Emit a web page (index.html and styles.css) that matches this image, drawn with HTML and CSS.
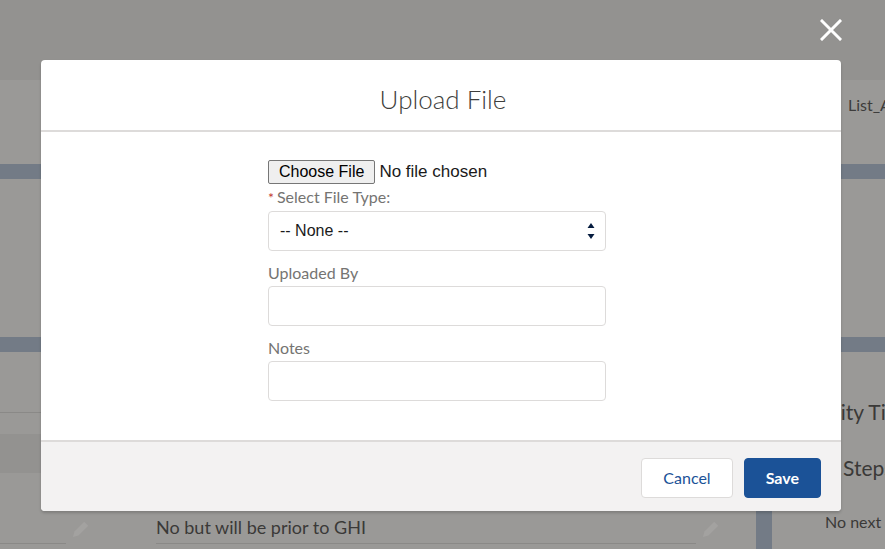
FILE: index.html
```html
<!DOCTYPE html>
<html lang="en">
<head>
<meta charset="utf-8">
<title>Upload File</title>
<link rel="stylesheet" href="styles.css">
</head>
<body>
<div class="page">
  <div class="bg-header"></div>
  <div class="bg-section bg-section-top">
    <span class="list-label">List_Attachments</span>
  </div>
  <div class="bg-stripe"></div>
  <div class="bg-section bg-section-mid"></div>
  <div class="bg-stripe"></div>
  <div class="bg-lower">
    <div class="bg-main">
      <div class="bg-rule"></div>
      <div class="bg-band"></div>
      <div class="bg-fields">
        <div class="bg-field bg-field-short"></div>
        <svg class="pencil" viewBox="0 0 18 18"><path d="M13 0.8l4.2 4.2-10.4 10.4-5.8 1.6 1.6-5.8z" fill="currentColor"/></svg>
        <div class="bg-field bg-field-long">No but will be prior to GHI</div>
        <svg class="pencil" viewBox="0 0 18 18"><path d="M13 0.8l4.2 4.2-10.4 10.4-5.8 1.6 1.6-5.8z" fill="currentColor"/></svg>
      </div>
    </div>
    <div class="bg-vstrip"></div>
    <div class="bg-side">
      <div class="side-title side-title-1">Activity Timeline</div>
      <div class="side-title side-title-2">Next Steps</div>
      <div class="side-note">No next steps</div>
    </div>
  </div>
</div>

<button class="close-btn" aria-label="Close">
  <svg viewBox="0 0 22 22" width="22" height="22"><path d="M2 2L20 20M20 2L2 20" stroke="#fff" stroke-width="3" stroke-linecap="square"/></svg>
</button>

<div class="modal">
  <div class="modal-header">
    <h2 class="modal-title">Upload File</h2>
  </div>
  <div class="modal-body">
    <div class="form">
      <div class="file-row">
        <span class="file-btn">Choose File</span>
        <span class="file-text">No file chosen</span>
      </div>
      <label class="label label-first"><abbr class="req">*</abbr>Select File Type:</label>
      <div class="select">
        <span class="select-value">-- None --</span>
        <span class="select-arrows">
          <svg viewBox="0 0 8 18" width="8" height="18"><path d="M4 1L7.5 6H0.5z M0.5 12H7.5L4 17z" fill="#061c3f"/></svg>
        </span>
      </div>
      <label class="label">Uploaded By</label>
      <div class="input"></div>
      <label class="label">Notes</label>
      <div class="input"></div>
    </div>
  </div>
  <div class="modal-footer">
    <button class="btn btn-neutral">Cancel</button>
    <button class="btn btn-brand">Save</button>
  </div>
</div>
</body>
</html>
```

FILE: styles.css
```css
html, body {
  margin: 0;
  padding: 0;
}
body {
  width: 885px;
  height: 549px;
  overflow: hidden;
  position: relative;
  background: #9a9997;
  font-family: Lato, "Noto Sans", sans-serif;
}
.page {
  display: flex;
  flex-direction: column;
  height: 549px;
}
.bg-header {
  height: 80px;
  background: #939290;
  flex: none;
}
.bg-section {
  background: #9a9997;
  flex: none;
}
.bg-section-top {
  height: 84px;
  display: flex;
  align-items: flex-start;
}
.list-label {
  padding-left: 848px;
  padding-top: 15px;
  white-space: nowrap;
  font-size: 16px;
  color: #3d3c3b;
}
.bg-stripe {
  height: 15px;
  background: #737b86;
  flex: none;
}
.bg-section-mid {
  height: 158px;
}
.bg-lower {
  flex: 1;
  display: grid;
  grid-template-columns: 756px 16px 1fr;
}
.bg-main {
  display: flex;
  flex-direction: column;
}
.bg-rule {
  margin-top: 60px;
  height: 1px;
  background: #8a8987;
}
.bg-band {
  margin-top: 21px;
  height: 39px;
  background: #939290;
}
.bg-fields {
  display: flex;
  align-items: flex-end;
  margin-top: 41px;
}
.bg-field {
  height: 30px;
  padding-top: 1px;
  border-bottom: 1px solid #8a8987;
  font-size: 18px;
  line-height: 24px;
  color: #3a3938;
  box-sizing: border-box;
  white-space: nowrap;
}
.bg-field-short {
  width: 66px;
}
.bg-field-long {
  width: 540px;
  margin-left: 67px;
}
.pencil {
  width: 17px;
  height: 17px;
  color: #a3a2a0;
  margin: 0 0 6px 6px;
  flex: none;
}
.bg-vstrip {
  background: #737b86;
}
.bg-side {
  display: flex;
  flex-direction: column;
  white-space: nowrap;
  color: #3a3938;
}
.side-title {
  font-size: 21px;
  line-height: 25px;
  padding-left: 21px;
}
.side-title-1 {
  margin-top: 47px;
}
.side-title-2 {
  margin-top: 31px;
}
.side-note {
  font-size: 16px;
  padding-left: 53px;
  margin-top: 32px;
}

.close-btn {
  position: absolute;
  left: 820px;
  top: 19px;
  width: 22px;
  height: 22px;
  padding: 0;
  border: 0;
  background: transparent;
  display: block;
}
.close-btn svg {
  display: block;
}

.modal {
  position: absolute;
  left: 41px;
  top: 60px;
  width: 800px;
  background: #fff;
  border-radius: 4px;
  box-shadow: 0 2px 3px rgba(0, 0, 0, 0.18);
  display: flex;
  flex-direction: column;
}
.modal-header {
  height: 70px;
  border-bottom: 2px solid #dddbda;
  display: flex;
  align-items: center;
  justify-content: center;
}
.modal-title {
  margin: 0 0 0 4px;
  font-size: 26px;
  font-weight: 300;
  color: #3e3e3c;
  line-height: 31px;
  padding-top: 8px;
}
.modal-body {
  height: 308px;
  padding-left: 227px;
  padding-top: 28px;
  box-sizing: border-box;
}
.form {
  width: 338px;
  display: flex;
  flex-direction: column;
  align-items: stretch;
}
.file-row {
  display: flex;
  align-items: center;
  height: 24px;
  font-family: "Liberation Sans", Arial, sans-serif;
  font-size: 16px;
}
.file-btn {
  height: 24px;
  box-sizing: border-box;
  padding: 0 10px;
  background: #efefef;
  border: 1px solid #767676;
  border-radius: 2px;
  color: #000;
  display: flex;
  align-items: center;
}
.file-text {
  margin-left: 4px;
  font-size: 17px;
  color: #1a1a1a;
}
.label {
  font-size: 16px;
  line-height: 22px;
  color: #757472;
  margin-top: 11px;
  margin-bottom: 2px;
  display: block;
}
.label-first {
  margin-top: 2px;
}
.req {
  color: #c23934;
  text-decoration: none;
  margin-right: 3px;
  font-size: 14px;
}
.select, .input {
  height: 40px;
  border: 1px solid #dddbda;
  border-radius: 4px;
  box-sizing: border-box;
  background: #fff;
}
.select {
  display: flex;
  align-items: center;
  justify-content: space-between;
  padding: 0 10px 0 11px;
}
.select-value {
  font-family: "Liberation Sans", Arial, sans-serif;
  font-size: 16px;
  color: #1a1a1a;
}
.select-arrows svg {
  display: block;
}
.modal-footer {
  height: 71px;
  border-top: 2px solid #dddbda;
  background: #f3f2f2;
  border-radius: 0 0 4px 4px;
  box-sizing: border-box;
  display: flex;
  justify-content: flex-end;
  align-items: flex-start;
  padding: 16px 20px 0 0;
  gap: 11px;
}
.btn {
  height: 40px;
  padding: 0 21px;
  border-radius: 4px;
  font-family: Lato, "Noto Sans", sans-serif;
  font-size: 16px;
  line-height: 38px;
  box-sizing: border-box;
}
.btn-neutral {
  background: #fff;
  border: 1px solid #dddbda;
  color: #1b5297;
}
.btn-brand {
  background: #1b5297;
  border: 1px solid #1b5297;
  color: #fff;
  font-weight: 700;
}
```
